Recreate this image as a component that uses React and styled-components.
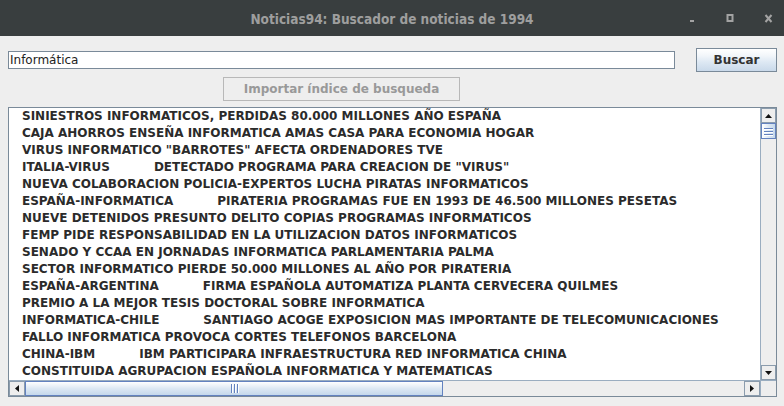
import React from "react";
import styled, { createGlobalStyle } from "styled-components";

const Global = createGlobalStyle`
  html, body { margin: 0; padding: 0; background: #eeeeee; }
  body { font-family: "DejaVu Sans", "Noto Sans", sans-serif; }
`;

const Window = styled.div`
  width: 784px;
  height: 406px;
  display: flex;
  flex-direction: column;
  background: #eeeeee;
  overflow: hidden;
`;

const TitleBar = styled.div`
  height: 36px;
  flex: none;
  background: #393e3f;
  display: flex;
  align-items: center;
  position: relative;
`;

const Title = styled.div`
  flex: 1;
  text-align: center;
  color: #9e9e9e;
  font-family: "DejaVu Sans Condensed", "DejaVu Sans", sans-serif;
  font-weight: bold;
  font-size: 13.5px;
  padding-top: 1px;
`;

const Controls = styled.div`
  position: absolute;
  right: -4px;
  top: 0;
  height: 36px;
  display: flex;
  align-items: center;
`;

const Ctl = styled.div`
  width: 38.5px;
  height: 36px;
  display: flex;
  align-items: center;
  justify-content: center;
`;

const Content = styled.div`
  flex: 1;
  display: grid;
  grid-template-columns: 1fr 81px;
  grid-template-rows: 24px 24px 290px;
  column-gap: 21px;
  row-gap: 5px;
  padding: 12px 7px 0 8px;
`;

const Field = styled.div`
  align-self: center;
  height: 16px;
  margin-top: -1px;
  border: 1px solid #7a8a99;
  background: #ffffff;
  font-size: 12px;
  color: #222;
  line-height: 16px;
  padding-left: 1px;
  white-space: nowrap;
`;

const Button = styled.div`
  box-sizing: border-box;
  height: 24px;
  border: 1px solid ${(p) => (p.disabled ? "#b8b8b8" : "#7a8a99")};
  background: ${(p) =>
    p.disabled
      ? "#eeeeee"
      : "linear-gradient(#ffffff 0%, #f2f6fa 30%, #dde8f3 60%, #c9d9ea 100%)"};
  color: ${(p) => (p.disabled ? "#999999" : "#333333")};
  font-size: 12px;
  font-weight: bold;
  display: flex;
  align-items: center;
  justify-content: center;
  white-space: nowrap;
`;

const ImportButton = styled(Button)`
  width: 237px;
  justify-self: center;
`;

const ScrollPane = styled.div`
  grid-column: 1 / span 2;
  margin-top: 1px;
  box-sizing: border-box;
  height: 290px;
  border: 1px solid #7a8a99;
  display: grid;
  grid-template-columns: 1fr 16px;
  grid-template-rows: 1fr 16px;
  background: #ffffff;
`;

const Viewport = styled.div`
  background: #ffffff;
  overflow: hidden;
  padding-left: 13px;
`;

const Row = styled.div`
  height: 17px;
  line-height: 17px;
  font-size: 12px;
  font-weight: bold;
  color: #2b2b2b;
  white-space: pre;
`;

const Tag = styled.span`
  margin-right: 44px;
`;

const VBar = styled.div`
  background: #eeeeee;
  border-left: 1px solid #9aadc0;
  display: flex;
  flex-direction: column;
`;

const HBar = styled.div`
  background: #eeeeee;
  border-top: 1px solid #9aadc0;
  display: flex;
`;

const ArrowBtn = styled.div`
  box-sizing: border-box;
  width: ${(p) => (p.vertical ? "15px" : "16px")};
  height: 15px;
  flex: none;
  background: #eeeeee;
  border: 1px solid #8b9cad;
  border-width: ${(p) => p.edges};
  display: flex;
  align-items: center;
  justify-content: center;
`;

const VThumb = styled.div`
  box-sizing: border-box;
  height: 16px;
  flex: none;
  background: linear-gradient(90deg, #ffffff, #dde8f3 50%, #c5d8eb);
  border: 1px solid #6382bf;
  display: flex;
  flex-direction: column;
  align-items: center;
  justify-content: center;
  gap: 2px;
`;

const GripH = styled.div`
  width: 9px;
  height: 1px;
  background: #6382bf;
  box-shadow: 0 1px 0 #ffffff;
`;

const HThumb = styled.div`
  box-sizing: border-box;
  width: 418px;
  flex: none;
  background: linear-gradient(#ffffff, #dde8f3 50%, #c5d8eb);
  border: 1px solid #6382bf;
  display: flex;
  align-items: center;
  justify-content: center;
  gap: 2px;
`;

const GripV = styled.div`
  width: 1px;
  height: 9px;
  background: #6382bf;
  box-shadow: 1px 0 0 #ffffff;
`;

const Track = styled.div`
  flex: 1;
`;

const Corner = styled.div`
  background: #eeeeee;
  border-left: 1px solid #9aadc0;
  border-top: 1px solid #9aadc0;
`;

const Tri = ({ dir }) => {
  const pts = {
    up: "0,4 7,4 3.5,0",
    down: "0,0 7,0 3.5,4",
    left: "4,0 4,7 0,3.5",
    right: "0,0 0,7 4,3.5",
  }[dir];
  const vertical = dir === "up" || dir === "down";
  return (
    <svg width={vertical ? 7 : 4} height={vertical ? 4 : 7} viewBox={vertical ? "0 0 7 4" : "0 0 4 7"}>
      <polygon points={pts} fill="#111" />
    </svg>
  );
};

const rows = [
  [null, "SINIESTROS INFORMATICOS, PERDIDAS 80.000 MILLONES AÑO ESPAÑA"],
  [null, "CAJA AHORROS ENSEÑA INFORMATICA AMAS CASA PARA ECONOMIA HOGAR"],
  [null, 'VIRUS INFORMATICO "BARROTES" AFECTA ORDENADORES TVE'],
  ["ITALIA-VIRUS", 'DETECTADO PROGRAMA PARA CREACION DE "VIRUS"'],
  [null, "NUEVA COLABORACION POLICIA-EXPERTOS LUCHA PIRATAS INFORMATICOS"],
  ["ESPAÑA-INFORMATICA", "PIRATERIA PROGRAMAS FUE EN 1993 DE 46.500 MILLONES PESETAS"],
  [null, "NUEVE DETENIDOS PRESUNTO DELITO COPIAS PROGRAMAS INFORMATICOS"],
  [null, "FEMP PIDE RESPONSABILIDAD EN LA UTILIZACION DATOS INFORMATICOS"],
  [null, "SENADO Y CCAA EN JORNADAS INFORMATICA PARLAMENTARIA PALMA"],
  [null, "SECTOR INFORMATICO PIERDE 50.000 MILLONES AL AÑO POR PIRATERIA"],
  ["ESPAÑA-ARGENTINA", "FIRMA ESPAÑOLA AUTOMATIZA PLANTA CERVECERA QUILMES"],
  [null, "PREMIO A LA MEJOR TESIS DOCTORAL SOBRE INFORMATICA"],
  ["INFORMATICA-CHILE", "SANTIAGO ACOGE EXPOSICION MAS IMPORTANTE DE TELECOMUNICACIONES"],
  [null, "FALLO INFORMATICA PROVOCA CORTES TELEFONOS BARCELONA"],
  ["CHINA-IBM", "IBM PARTICIPARA INFRAESTRUCTURA RED INFORMATICA CHINA"],
  [null, "CONSTITUIDA AGRUPACION ESPAÑOLA INFORMATICA Y MATEMATICAS"],
];

export default function App() {
  return (
    <>
      <Global />
      <Window>
        <TitleBar>
          <Title>Noticias94: Buscador de noticias de 1994</Title>
          <Controls>
            <Ctl>
              <svg width="8" height="8" viewBox="0 0 8 8">
                <rect x="2" y="6" width="4" height="2" fill="#a3a3a3" />
              </svg>
            </Ctl>
            <Ctl>
              <svg width="8" height="8" viewBox="0 0 8 8">
                <rect x="1.5" y="1" width="5" height="6" fill="none" stroke="#a3a3a3" strokeWidth="2" />
              </svg>
            </Ctl>
            <Ctl>
              <svg width="9" height="9" viewBox="0 0 9 9">
                <path d="M1.5 1 L7.5 8 M7.5 1 L1.5 8" stroke="#a3a3a3" strokeWidth="2" />
              </svg>
            </Ctl>
          </Controls>
        </TitleBar>
        <Content>
          <Field>Informática</Field>
          <Button>Buscar</Button>
          <ImportButton disabled>Importar índice de busqueda</ImportButton>
          <div />
          <ScrollPane>
            <Viewport>
              {rows.map(([tag, text], i) => (
                <Row key={i}>
                  {tag && <Tag>{tag}</Tag>}
                  {text}
                </Row>
              ))}
            </Viewport>
            <VBar>
              <ArrowBtn vertical edges="0 0 1 0">
                <Tri dir="up" />
              </ArrowBtn>
              <VThumb>
                <GripH />
                <GripH />
                <GripH />
              </VThumb>
              <Track />
              <ArrowBtn vertical edges="1 0 0 0">
                <Tri dir="down" />
              </ArrowBtn>
            </VBar>
            <HBar>
              <ArrowBtn edges="0 1 0 0">
                <Tri dir="left" />
              </ArrowBtn>
              <HThumb>
                <GripV />
                <GripV />
                <GripV />
              </HThumb>
              <Track />
              <ArrowBtn edges="0 1 0 1">
                <Tri dir="right" />
              </ArrowBtn>
            </HBar>
            <Corner />
          </ScrollPane>
        </Content>
      </Window>
    </>
  );
}
